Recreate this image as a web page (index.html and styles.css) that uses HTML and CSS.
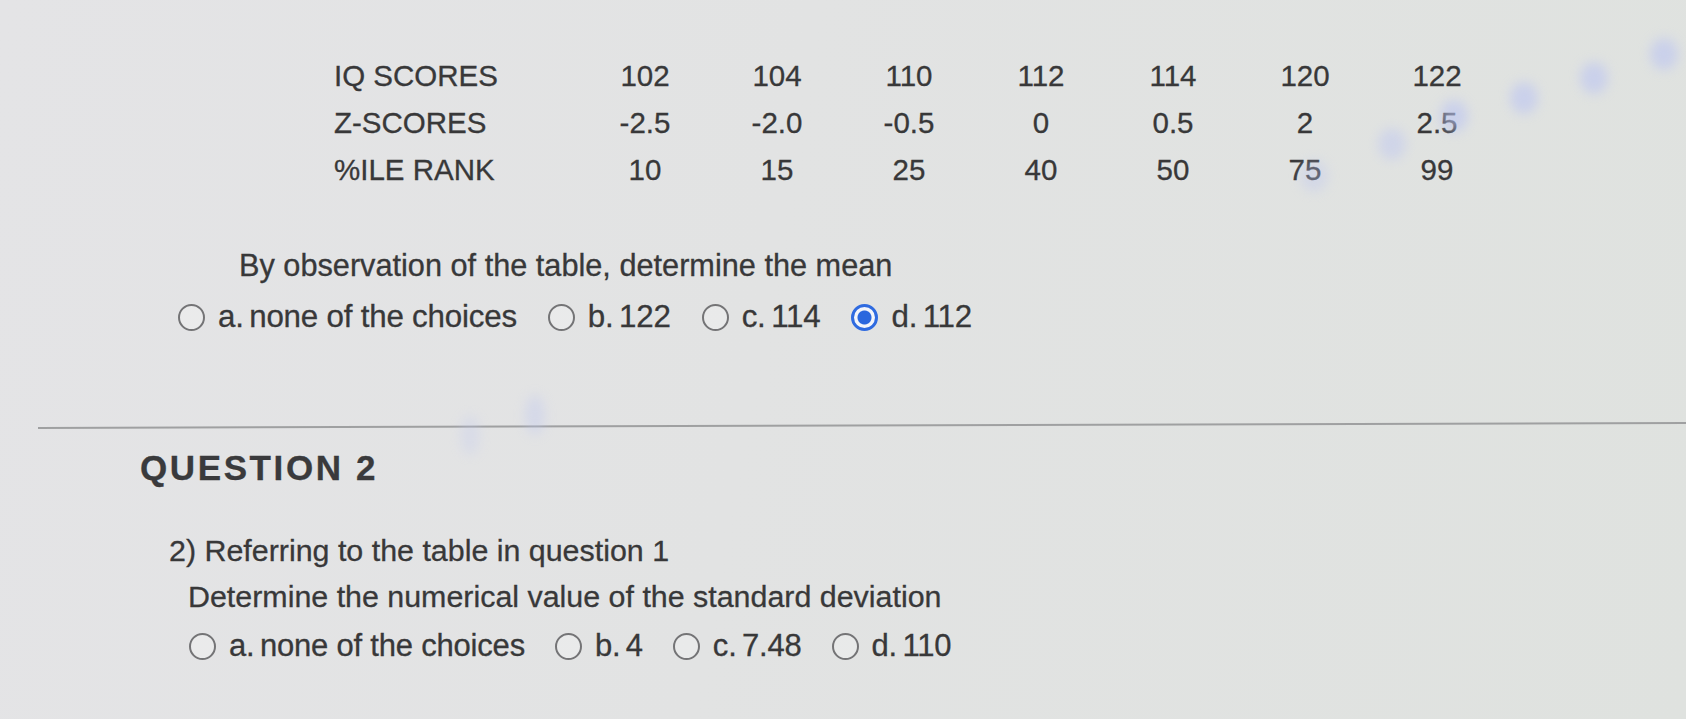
FILE: index.html
```html
<!DOCTYPE html>
<html lang="en">
<head>
<meta charset="utf-8">
<title>Quiz</title>
<link rel="stylesheet" href="styles.css">
</head>
<body>
<main class="page">
  <section class="question q1">
    <div class="score-table">
      <div class="label">IQ SCORES</div><div>102</div><div>104</div><div>110</div><div>112</div><div>114</div><div>120</div><div>122</div>
      <div class="label">Z-SCORES</div><div>-2.5</div><div>-2.0</div><div>-0.5</div><div>0</div><div>0.5</div><div>2</div><div>2.5</div>
      <div class="label">%ILE RANK</div><div>10</div><div>15</div><div>25</div><div>40</div><div>50</div><div>75</div><div>99</div>
    </div>
    <p class="prompt prompt-q1">By observation of the table, determine the mean</p>
    <div class="options options-q1">
      <label class="option"><span class="radio"></span><span class="opt-text"><span class="key">a. </span>none of the choices</span></label>
      <label class="option"><span class="radio"></span><span class="opt-text"><span class="key">b. </span>122</span></label>
      <label class="option"><span class="radio"></span><span class="opt-text"><span class="key">c. </span>114</span></label>
      <label class="option"><span class="radio checked"></span><span class="opt-text"><span class="key">d. </span>112</span></label>
    </div>
  </section>
  <hr class="divider">
  <section class="question q2">
    <h2 class="q-title">QUESTION 2</h2>
    <p class="prompt prompt-q2a">2) Referring to the table in question 1</p>
    <p class="prompt prompt-q2b">Determine the numerical value of the standard deviation</p>
    <div class="options options-q2">
      <label class="option"><span class="radio"></span><span class="opt-text"><span class="key">a. </span>none of the choices</span></label>
      <label class="option"><span class="radio"></span><span class="opt-text"><span class="key">b. </span>4</span></label>
      <label class="option"><span class="radio"></span><span class="opt-text"><span class="key">c. </span>7.48</span></label>
      <label class="option"><span class="radio"></span><span class="opt-text"><span class="key">d. </span>110</span></label>
    </div>
  </section>
</main>
<div class="glare g1"></div>
<div class="glare g2"></div>
<div class="glare g3"></div>
<div class="glare g4"></div>
<div class="glare g5"></div>
<div class="glare g6"></div>
<div class="glare g7"></div>
<div class="glare g8"></div>
</body>
</html>
```
FILE: styles.css
```css
html, body {
  margin: 0;
  padding: 0;
}
body {
  position: relative;
  width: 1686px;
  height: 719px;
  overflow: hidden;
  background: linear-gradient(100deg, #e4e4e6 0%, #e2e3e3 45%, #dfe2df 100%);
  font-family: "Liberation Sans", Arial, Helvetica, sans-serif;
  color: #383839;
  -webkit-text-stroke: 0.3px #383839;
}
.page {
  padding-top: 52px;
}
.score-table {
  display: grid;
  grid-template-columns: 245px repeat(7, 132px);
  margin-left: 334px;
  font-size: 29.5px;
  line-height: 47px;
  text-align: center;
}
.score-table .label {
  text-align: left;
}
.prompt {
  margin: 0;
  font-size: 30.4px;
  line-height: 46px;
}
.prompt-q1 {
  margin-top: 49px;
  margin-left: 239px;
  font-size: 30.7px;
  line-height: 48px;
}
.options {
  display: flex;
  align-items: center;
  gap: 31px;
  height: 48px;
  font-size: 31.3px;
}
.options-q1 {
  margin-top: 3px;
  margin-left: 178px;
}
.option {
  display: flex;
  align-items: center;
  gap: 13px;
}
.opt-text {
  letter-spacing: -0.2px;
}
.key {
  word-spacing: -3px;
}
.radio {
  box-sizing: border-box;
  width: 27px;
  height: 27px;
  border-radius: 50%;
  border: 2px solid #747476;
  background: rgba(255, 255, 255, 0.25);
}
.radio.checked {
  border: 3px solid #2f6be0;
  background: radial-gradient(circle, #2a67de 0 6.5px, #f3f5fa 7.5px);
}
.divider {
  margin: 86px 0 0 38px;
  height: 2px;
  border: 0;
  background: #9fa0a1;
  transform-origin: left center;
  transform: rotate(-0.17deg);
}
.q-title {
  margin: 19px 0 0 140px;
  font-size: 35px;
  line-height: 40px;
  letter-spacing: 2.6px;
  font-weight: bold;
  color: #3a3a3c;
}
.prompt-q2a {
  margin-top: 39px;
  margin-left: 169px;
}
.prompt-q2b {
  margin-left: 188px;
}
.options-q2 {
  margin-top: 3px;
  margin-left: 189px;
  font-size: 31px;
  gap: 30px;
}
.glare {
  position: absolute;
  width: 28px;
  height: 32px;
  border-radius: 50%;
  background: #bcc5f2;
  filter: blur(6px);
  opacity: 0.6;
  pointer-events: none;
}
.g1 { left: 1650px; top: 38px; }
.g2 { left: 1580px; top: 62px; }
.g3 { left: 1510px; top: 82px; }
.g4 { left: 1440px; top: 100px; }
.g5 { left: 1378px; top: 128px; opacity: 0.45; }
.g6 { left: 1300px; top: 160px; opacity: 0.35; }
.g7 { left: 525px; top: 395px; opacity: 0.35; width: 20px; height: 40px; }
.g8 { left: 460px; top: 415px; opacity: 0.25; width: 20px; height: 40px; }
```
